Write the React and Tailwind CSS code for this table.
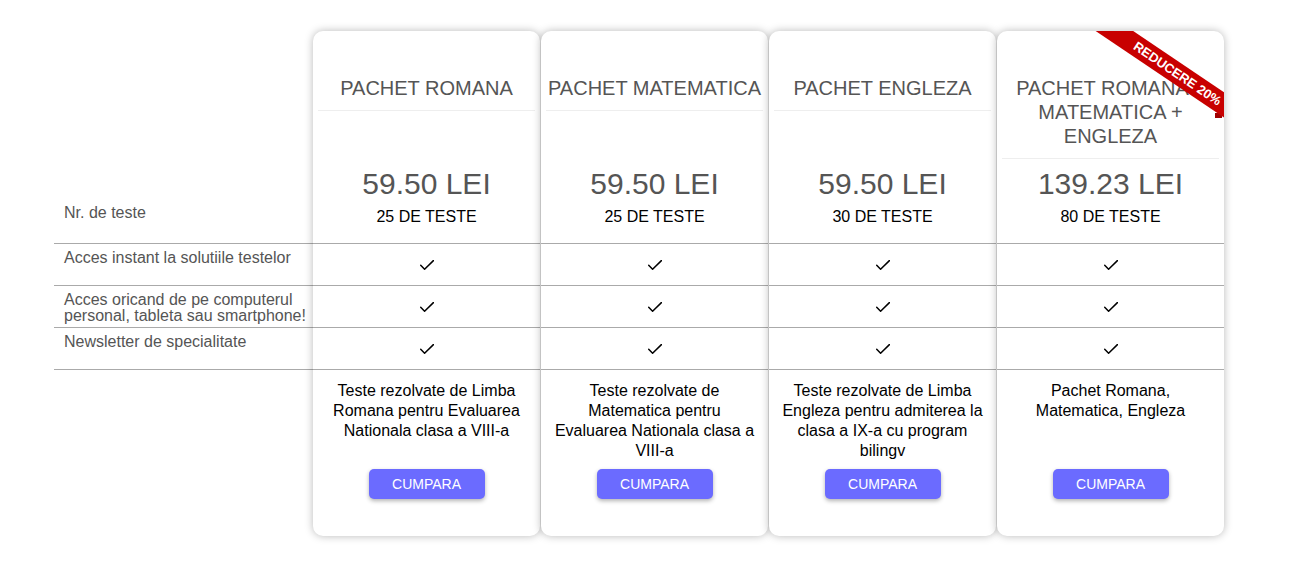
import React from "react";

const packages = [
  {
    title: "Pachet Romana",
    price: "59.50 LEI",
    tests: "25 DE TESTE",
    text: "Teste rezolvate de Limba Romana pentru Evaluarea Nationala clasa a VIII-a",
  },
  {
    title: "Pachet Matematica",
    price: "59.50 LEI",
    tests: "25 DE TESTE",
    text: "Teste rezolvate de Matematica pentru Evaluarea Nationala clasa a VIII-a",
  },
  {
    title: "Pachet Engleza",
    price: "59.50 LEI",
    tests: "30 DE TESTE",
    text: "Teste rezolvate de Limba Engleza pentru admiterea la clasa a IX-a cu program bilingv",
  },
  {
    title: "Pachet Romana + Matematica + Engleza",
    price: "139.23 LEI",
    tests: "80 DE TESTE",
    text: "Pachet Romana, Matematica, Engleza",
    ribbon: "REDUCERE 20%",
  },
];

const features = [
  "Acces instant la solutiile testelor",
  "Acces oricand de pe computerul personal, tableta sau smartphone!",
  "Newsletter de specialitate",
];

function Check() {
  return (
    <svg width="14" height="10" viewBox="0 0 14 10" fill="none">
      <polyline
        points="0.7,5.2 4.6,9.2 13.4,0.6"
        stroke="#000"
        strokeWidth="1.5"
        strokeLinecap="round"
        strokeLinejoin="round"
      />
    </svg>
  );
}

function Ribbon({ label }) {
  return (
    <>
      <div className="pointer-events-none absolute inset-0 z-10 overflow-hidden rounded-[10px]">
        <div className="absolute left-[53px] top-[27px] flex h-[21px] w-[240px] rotate-[34deg] items-center justify-center bg-[#c80000] pl-[18px] text-[13px] font-bold leading-none text-white">
          {label}
        </div>
      </div>
      <div className="absolute left-[218px] top-[82px] z-0 h-[5px] w-[7px] bg-[#a00000]" />
    </>
  );
}

function Card({ pkg }) {
  return (
    <div className="relative flex h-[505px] w-[227px] flex-col rounded-[10px] bg-white shadow-[0_0_8px_rgba(0,0,0,0.28)]">
      {pkg.ribbon ? <Ribbon label={pkg.ribbon} /> : null}

      <div className="flex h-[212px] flex-col">
        <h2 className="pb-[10px] pt-[45px] text-center text-[20px] uppercase leading-6 text-[#555]">
          {pkg.title}
        </h2>
        <div className="mx-[5px] h-px bg-[#eeeeee]" />
        <div className="flex-1" />
        <p className="text-center text-[30px] leading-[34px] text-[#555]">
          {pkg.price}
        </p>
        <p className="mt-[7px] pb-[17px] text-center text-base leading-[18px] text-black">
          {pkg.tests}
        </p>
      </div>

      {features.map((f) => (
        <div
          key={f}
          className="flex h-[42px] items-center justify-center border-t border-[#aaaaaa]"
        >
          <Check />
        </div>
      ))}

      <div className="flex flex-1 flex-col items-center border-t border-[#aaaaaa] px-[10px] pt-[11px]">
        <p className="h-[80px] text-center text-base leading-5 text-black">
          {pkg.text}
        </p>
        <button
          type="button"
          className="mt-[8px] h-[30px] w-[116px] rounded-[5px] bg-[#6b6bff] pt-px text-[14px] text-white shadow-[0_2px_4px_rgba(0,0,0,0.3)]"
        >
          CUMPARA
        </button>
      </div>
    </div>
  );
}

export default function App() {
  return (
    <div className="min-h-screen bg-white pl-[54px] pt-[31px] font-['Liberation_Sans',Arial,sans-serif]">
      <div className="flex">
        <div className="flex w-[259px] flex-col text-base leading-4 text-[#555]">
          <div className="flex h-[212px] items-end pb-[22px] pl-[10px]">
            Nr. de teste
          </div>
          {features.map((f) => (
            <div
              key={f}
              className="h-[42px] border-t border-[#aaaaaa] pl-[10px] pt-[6px]"
            >
              {f}
            </div>
          ))}
          <div className="border-t border-[#aaaaaa]" />
        </div>

        <div className="flex gap-px">
          {packages.map((pkg) => (
            <Card key={pkg.title} pkg={pkg} />
          ))}
        </div>
      </div>
    </div>
  );
}
